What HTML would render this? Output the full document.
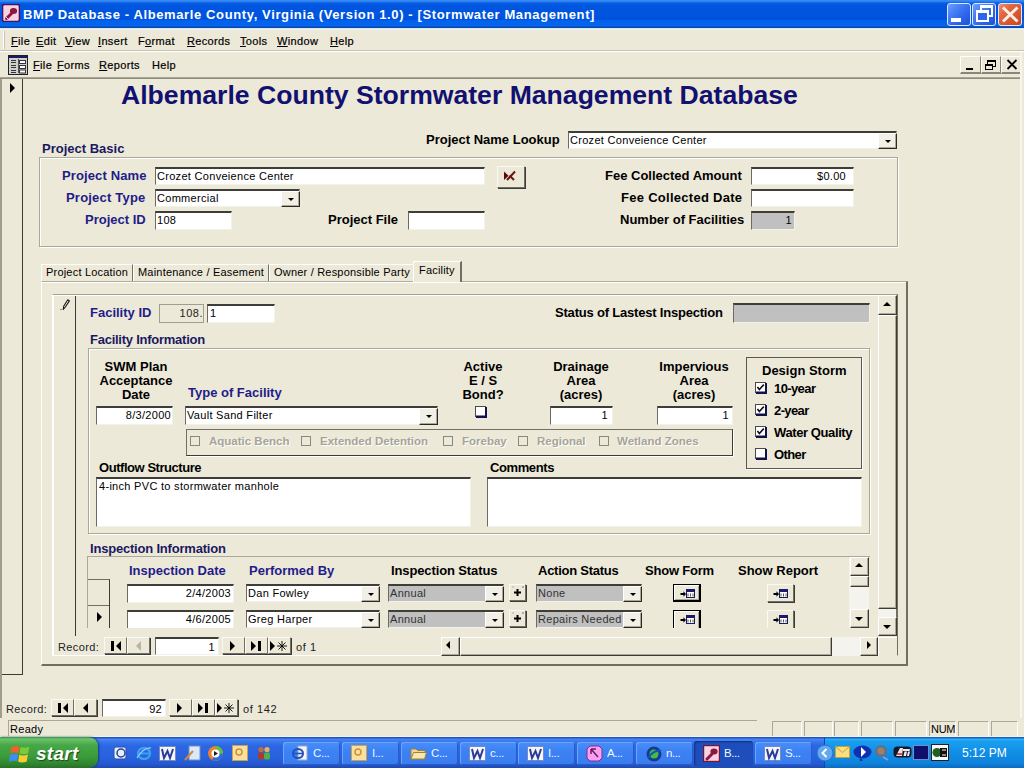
<!DOCTYPE html>
<html><head><meta charset="utf-8"><title>BMP Database</title>
<style>
*{margin:0;padding:0;box-sizing:border-box}
html,body{width:1024px;height:768px;overflow:hidden;background:#ECE9D8;font-family:"Liberation Sans",sans-serif;position:relative}
.a{position:absolute}
.t{position:absolute;white-space:nowrap;line-height:1}
.m{position:absolute;white-space:nowrap;line-height:1;font-size:11px;color:#000;letter-spacing:0.35px;-webkit-text-stroke:0.2px #000}
.n{position:absolute;white-space:nowrap;line-height:1;font-size:11px;color:#222;letter-spacing:0.35px}
.u{text-decoration:underline;text-underline-offset:1px}
.lb{position:absolute;white-space:nowrap;line-height:1;font-size:13px;font-weight:bold;color:#000}
.bl{color:#221C88}
.nv{color:#1A1862}
.tb{position:absolute;background:#fff;border-top:2px solid #3f3d38;border-left:1px solid #6b6a64;border-right:1px solid #F4F2E8;border-bottom:1px solid #F4F2E8}
.tx{position:absolute;font-size:11px;color:#000;white-space:nowrap;line-height:1;letter-spacing:0.3px}
.btn{position:absolute;background:#ECE9D8;border-top:1px solid #FAF9F4;border-left:1px solid #FAF9F4;border-right:1px solid #716F64;border-bottom:1px solid #716F64;box-shadow:1px 1px 0 #3c3b36}
.dd{position:absolute;top:0;right:-1px;bottom:-1px;width:19px;background:#F2F0E6;border-left:1px solid #fff;border-top:1px solid #fff;border-right:1px solid #2a2924;border-bottom:1px solid #2a2924;box-shadow:inset -1px -1px 0 #ACA899}
.dd:after{content:"";position:absolute;left:6px;top:6px;border-left:3px solid transparent;border-right:3px solid transparent;border-top:3px solid #000}
.grp{position:absolute;border:1px solid #ACA899;box-shadow:1px 1px 0 #fff, inset 1px 1px 0 #fff}
.sbb{position:absolute;background:#ECE9D8;border-top:1px solid #fff;border-left:1px solid #fff;border-right:1px solid #3c3b36;border-bottom:1px solid #3c3b36;box-shadow:inset -1px -1px 0 #ACA899}
</style></head><body>
<div class="a" style="left:0px;top:0px;width:1024px;height:28px;background:linear-gradient(#3A90F8 0px,#2A80F0 1.5px,#0A5EE2 3px,#0056E0 5px,#0054DE 16px,#0050D6 19px,#0060F2 20.5px,#0566EA 25.5px,#0A4AB4 27px,#0A48B0 28px)"></div>
<svg class="a" style="left:2px;top:4px;" width="18" height="18" viewBox="0 0 18 18"><rect x="0.5" y="0.5" width="17" height="17" rx="2" fill="#F6D2E2" stroke="#4A1258" stroke-width="1.6"/><path d="M4.5 14.5 L9.5 9.5" stroke="#8A1840" stroke-width="3" stroke-linecap="round"/><ellipse cx="11.5" cy="7" rx="3.6" ry="3" fill="#8A1840"/><path d="M4 13 L6 15" stroke="#F6D2E2" stroke-width="1"/></svg>
<div class="t" style="left:23px;top:8px;font-size:13px;font-weight:bold;color:#fff;letter-spacing:0.62px">BMP Database - Albemarle County, Virginia (Version 1.0) - [Stormwater Management]</div>
<div class="a" style="left:947px;top:3px;width:24px;height:23px;border:1px solid #DDE8FF;border-radius:3px;background:linear-gradient(135deg,#6EA0FF 0%,#4A80F6 30%,#2D64EA 65%,#1F52D8 100%)"></div>
<div class="a" style="left:972px;top:3px;width:24px;height:23px;border:1px solid #DDE8FF;border-radius:3px;background:linear-gradient(135deg,#6EA0FF 0%,#4A80F6 30%,#2D64EA 65%,#1F52D8 100%)"></div>
<div class="a" style="left:998px;top:3px;width:24px;height:23px;border:1px solid #DDE8FF;border-radius:3px;background:linear-gradient(135deg,#F09070 0%,#E26842 30%,#D9552E 65%,#C8441E 100%)"></div>
<div class="a" style="left:951px;top:18px;width:10px;height:4px;background:#fff"></div>
<div class="a" style="left:980px;top:5px;width:13px;height:12px;border:2px solid #fff;border-top-width:3px"></div>
<div class="a" style="left:976px;top:10px;width:13px;height:12px;border:2px solid #fff;border-top-width:3px;background:#2E66EA"></div>
<svg class="a" style="left:998px;top:3px;" width="24" height="23" viewBox="0 0 24 23"><path d="M5 4.5 L19.5 18.5 M19.5 4.5 L5 18.5" stroke="#FBF0E8" stroke-width="3"/></svg>
<div class="a" style="left:0px;top:28px;width:1024px;height:1px;background:#D6E8F8"></div>
<div class="a" style="left:0px;top:29px;width:1024px;height:1px;background:#EEF0EA"></div>
<div class="a" style="left:3px;top:31px;width:2px;height:18px;border-left:1px solid #fff;border-right:1px solid #C8C5B4"></div>
<div class="m" style="left:11px;top:36px;"><span class="u">F</span>ile</div>
<div class="m" style="left:36px;top:36px;"><span class="u">E</span>dit</div>
<div class="m" style="left:65px;top:36px;"><span class="u">V</span>iew</div>
<div class="m" style="left:98px;top:36px;"><span class="u">I</span>nsert</div>
<div class="m" style="left:138px;top:36px;">F<span class="u">o</span>rmat</div>
<div class="m" style="left:187px;top:36px;"><span class="u">R</span>ecords</div>
<div class="m" style="left:240px;top:36px;"><span class="u">T</span>ools</div>
<div class="m" style="left:277px;top:36px;"><span class="u">W</span>indow</div>
<div class="m" style="left:330px;top:36px;"><span class="u">H</span>elp</div>
<div class="a" style="left:0px;top:50px;width:1024px;height:1px;background:#C5C2B2"></div>
<div class="a" style="left:0px;top:51px;width:1024px;height:1px;background:#fff"></div>
<svg class="a" style="left:8px;top:55px;" width="20" height="20" viewBox="0 0 20 20"><rect x="0.5" y="0.5" width="19" height="19" fill="#CFCFCF" stroke="#202020"/><rect x="1" y="1" width="18" height="2" fill="#1A1A6A"/><path d="M3 5.5 H8 M3 7.5 H8 M3 10.5 H8 M3 12.5 H8 M3 15.5 H8 M3 17.5 H8" stroke="#333" stroke-width="1"/><path d="M10.5 4 V18" stroke="#555" stroke-width="1"/><rect x="11.5" y="5.5" width="6" height="3" fill="#fff" stroke="#333" stroke-width="1"/><rect x="11.5" y="10.5" width="6" height="3" fill="#fff" stroke="#333" stroke-width="1"/><rect x="11.5" y="15" width="6" height="3" fill="#fff" stroke="#333" stroke-width="1"/></svg>
<div class="m" style="left:33px;top:60px;"><span class="u">F</span>ile</div>
<div class="m" style="left:57px;top:60px;"><span class="u">F</span>orms</div>
<div class="m" style="left:99px;top:60px;"><span class="u">R</span>eports</div>
<div class="m" style="left:152px;top:60px;">Help</div>
<div class="a" style="left:960px;top:56px;width:21px;height:18px;background:#ECE9D8;border-top:1px solid #fff;border-left:1px solid #fff;border-right:1px solid #8a877a;border-bottom:2px solid #8a877a"></div>
<div class="a" style="left:981px;top:56px;width:20px;height:18px;background:#ECE9D8;border-top:1px solid #fff;border-left:1px solid #fff;border-right:1px solid #8a877a;border-bottom:2px solid #8a877a"></div>
<div class="a" style="left:1001px;top:56px;width:21px;height:18px;background:#ECE9D8;border-top:1px solid #fff;border-left:1px solid #fff;border-right:1px solid #8a877a;border-bottom:2px solid #8a877a"></div>
<div class="a" style="left:966px;top:68px;width:7px;height:2px;background:#000"></div>
<div class="a" style="left:987px;top:60px;width:9px;height:7px;border:1px solid #000;border-top-width:2px"></div>
<div class="a" style="left:985px;top:64px;width:8px;height:6px;border:1px solid #000;border-top-width:2px;background:#ECE9D8"></div>
<svg class="a" style="left:1004px;top:57px;" width="16" height="15" viewBox="0 0 16 15"><path d="M3.5 3 L12.5 12 M12.5 3 L3.5 12" stroke="#000" stroke-width="1.8"/></svg>
<div class="a" style="left:0px;top:77px;width:1022px;height:1px;background:#A9A697"></div>
<div class="a" style="left:0px;top:78px;width:1022px;height:1px;background:#8F8C7E"></div>
<div class="a" style="left:0px;top:79px;width:2px;height:639px;background:#A09D8F"></div>
<div class="a" style="left:2px;top:79px;width:21px;height:596px;border-right:1px solid #3c3b36;border-bottom:1px solid #3c3b36"></div>
<div class="a" style="left:10px;top:83px;border-top:5px solid transparent;border-bottom:5px solid transparent;border-left:5px solid #000"></div>
<div class="a" style="left:1020px;top:52px;width:2px;height:670px;background:#F6F4EC"></div>
<div class="t" style="left:121px;top:82px;font-size:26.6px;font-weight:bold;color:#121070">Albemarle County Stormwater Management Database</div>
<div class="lb nv" style="left:42px;top:142px;">Project Basic</div>
<div class="lb" style="left:426px;top:133px;">Project Name Lookup</div>
<div class="tb" style="left:568px;top:131px;width:329px;height:18px;background:#fff"><div class="dd"></div></div>
<div class="tx" style="left:570px;top:135px;">Crozet Conveience Center</div>
<div class="grp" style="left:39px;top:157px;width:859px;height:90px"></div>
<div class="lb bl" style="left:62px;top:169px;letter-spacing:0.12px">Project Name</div>
<div class="tb" style="left:155px;top:167px;width:330px;height:18px;background:#fff;"></div>
<div class="tx" style="left:157px;top:171px;">Crozet Conveience Center</div>
<div class="btn" style="left:497px;top:166px;width:28px;height:22px;"></div>
<svg class="a" style="left:497px;top:166px;" width="28" height="22" viewBox="0 0 28 22"><path d="M7 5.5 L11.5 9.8 L7 14 Z" fill="#5a0a0a"/><path d="M10 14 L18 5.5 M12.5 9.5 L17 14" stroke="#6a1414" stroke-width="2" fill="none"/></svg>
<div class="lb bl" style="left:66px;top:191px;letter-spacing:0.2px">Project Type</div>
<div class="tb" style="left:155px;top:189px;width:145px;height:18px;background:#fff"><div class="dd"></div></div>
<div class="tx" style="left:157px;top:193px;">Commercial</div>
<div class="lb bl" style="left:85px;top:213px;">Project ID</div>
<div class="tb" style="left:155px;top:211px;width:77px;height:19px;background:#fff;"></div>
<div class="tx" style="left:157px;top:215px;">108</div>
<div class="lb" style="left:328px;top:213px;">Project File</div>
<div class="tb" style="left:408px;top:211px;width:77px;height:19px;background:#fff;"></div>
<div class="lb" style="left:605px;top:169px;">Fee Collected Amount</div>
<div class="tb" style="left:751px;top:167px;width:103px;height:18px;background:#fff;"></div>
<div class="tx" style="left:751px;top:171px;width:95px;text-align:right">$0.00</div>
<div class="lb" style="left:621px;top:191px;letter-spacing:0.28px">Fee Collected Date</div>
<div class="tb" style="left:751px;top:189px;width:103px;height:18px;background:#fff;"></div>
<div class="lb" style="left:620px;top:213px;">Number of Facilities</div>
<div class="tb" style="left:751px;top:211px;width:44px;height:19px;background:#C0C0C0;"></div>
<div class="tx" style="left:751px;top:215px;width:41px;text-align:right">1</div>
<div class="a" style="left:41px;top:281px;width:867px;height:385px;border-top:1px solid #B0AD9E;box-shadow:inset 0 1px 0 #fff;border-left:1px solid #fff;border-right:2px solid #716F64;border-bottom:2px solid #716F64"></div>
<div class="a" style="left:41px;top:264px;width:92px;height:17px;border-top:1px solid #fff;border-left:1px solid #fff;border-right:1px solid #716F64"></div>
<div class="tx" style="left:46px;top:267px;letter-spacing:0.2px">Project Location</div>
<div class="a" style="left:133px;top:264px;width:136px;height:17px;border-top:1px solid #fff;border-left:1px solid #fff;border-right:1px solid #716F64"></div>
<div class="tx" style="left:138px;top:267px;letter-spacing:0.2px">Maintenance / Easement</div>
<div class="a" style="left:269px;top:264px;width:145px;height:17px;border-top:1px solid #fff;border-left:1px solid #fff;border-right:1px solid #716F64"></div>
<div class="tx" style="left:274px;top:267px;letter-spacing:0.2px">Owner / Responsible Party</div>
<div class="a" style="left:413px;top:261px;width:49px;height:21px;background:#ECE9D8;border-top:1px solid #fff;border-left:1px solid #fff;border-right:2px solid #716F64"></div>
<div class="tx" style="left:419px;top:265px;letter-spacing:0.2px">Facility</div>
<div class="a" style="left:52px;top:294px;width:846px;height:362px;border-top:1px solid #A5A293;border-left:1px solid #fff;border-right:1px solid #716F64;border-bottom:1px solid #fff;box-shadow:inset 1px 1px 0 #fff"></div>
<div class="a" style="left:75px;top:296px;width:1px;height:340px;background:#3c3b36"></div>
<svg class="a" style="left:58px;top:297px;" width="14" height="14" viewBox="0 0 14 14"><path d="M5.2 12.5 L5.8 9 L9.8 2.8 L11.4 3.9 L7.3 10 Z" fill="#fff" stroke="#111" stroke-width="1.1" stroke-linejoin="round"/><path d="M2 12.5 H4" stroke="#888" stroke-width="1"/></svg>
<div class="lb bl" style="left:90px;top:306px;">Facility ID</div>
<div class="a" style="left:159px;top:304px;width:45px;height:19px;border:1px solid #A09E90;background:#ECE9D8"></div>
<div class="tx" style="left:159px;top:308px;width:44px;text-align:right;color:#222;letter-spacing:0.5px">108.</div>
<div class="tb" style="left:207px;top:304px;width:68px;height:19px;background:#fff;"></div>
<div class="tx" style="left:210px;top:308px;">1</div>
<div class="lb" style="left:555px;top:306px;letter-spacing:-0.2px">Status of Lastest Inspection</div>
<div class="tb" style="left:733px;top:303px;width:137px;height:20px;background:#C0C0C0;"></div>
<div class="lb nv" style="left:90px;top:333px;letter-spacing:-0.25px">Facility Information</div>
<div class="grp" style="left:88px;top:348px;width:782px;height:186px"></div>
<div class="lb" style="left:96px;top:360px;width:80px;text-align:center;line-height:14px">SWM Plan<br>Acceptance<br>Date</div>
<div class="tb" style="left:96px;top:406px;width:77px;height:19px;background:#fff;"></div>
<div class="tx" style="left:96px;top:410px;width:75px;text-align:right">8/3/2000</div>
<div class="lb bl" style="left:188px;top:386px;">Type of Facility</div>
<div class="tb" style="left:185px;top:406px;width:253px;height:19px;background:#fff"><div class="dd"></div></div>
<div class="tx" style="left:187px;top:410px;">Vault Sand Filter</div>
<div class="lb" style="left:453px;top:360px;width:60px;text-align:center;line-height:14px">Active<br>E / S<br>Bond?</div>
<svg class="a" style="left:475px;top:406px;" width="12" height="12" viewBox="0 0 12 12"><rect x="0.5" y="0.5" width="10" height="10" fill="#fff" stroke="#4a4a4a" stroke-width="1"/><path d="M1 10.8 H11.2 V1" stroke="#12124a" stroke-width="2.4" fill="none"/></svg>
<div class="lb" style="left:541px;top:360px;width:80px;text-align:center;line-height:14px">Drainage<br>Area<br>(acres)</div>
<div class="tb" style="left:550px;top:406px;width:63px;height:19px;background:#fff;"></div>
<div class="tx" style="left:550px;top:410px;width:58px;text-align:right">1</div>
<div class="lb" style="left:654px;top:360px;width:80px;text-align:center;line-height:14px">Impervious<br>Area<br>(acres)</div>
<div class="tb" style="left:657px;top:406px;width:76px;height:19px;background:#fff;"></div>
<div class="tx" style="left:657px;top:410px;width:72px;text-align:right">1</div>
<div class="a" style="left:186px;top:429px;width:547px;height:27px;border:1px solid #3c3b36;border-top-color:#716F64;border-left-color:#716F64;box-shadow:1px 1px 0 #fff"></div>
<div class="a" style="left:190px;top:436px;width:10px;height:10px;border:1px solid #8a887c"></div>
<div class="t" style="left:209px;top:436px;font-size:11.5px;font-weight:bold;color:#A6A498;text-shadow:1px 1px 0 #fff">Aquatic Bench</div>
<div class="a" style="left:301px;top:436px;width:10px;height:10px;border:1px solid #8a887c"></div>
<div class="t" style="left:320px;top:436px;font-size:11.5px;font-weight:bold;color:#A6A498;text-shadow:1px 1px 0 #fff">Extended Detention</div>
<div class="a" style="left:443px;top:436px;width:10px;height:10px;border:1px solid #8a887c"></div>
<div class="t" style="left:462px;top:436px;font-size:11.5px;font-weight:bold;color:#A6A498;text-shadow:1px 1px 0 #fff">Forebay</div>
<div class="a" style="left:518px;top:436px;width:10px;height:10px;border:1px solid #8a887c"></div>
<div class="t" style="left:537px;top:436px;font-size:11.5px;font-weight:bold;color:#A6A498;text-shadow:1px 1px 0 #fff">Regional</div>
<div class="a" style="left:599px;top:436px;width:10px;height:10px;border:1px solid #8a887c"></div>
<div class="t" style="left:617px;top:436px;font-size:11.5px;font-weight:bold;color:#A6A498;text-shadow:1px 1px 0 #fff">Wetland Zones</div>
<div class="a" style="left:746px;top:357px;width:116px;height:112px;border:1px solid #5a5850;box-shadow:1px 1px 0 #fff"></div>
<div class="lb" style="left:762px;top:364px;">Design Storm</div>
<svg class="a" style="left:755px;top:382px;" width="12" height="12" viewBox="0 0 12 12"><rect x="0.5" y="0.5" width="10" height="10" fill="#fff" stroke="#4a4a4a" stroke-width="1"/><path d="M1 10.8 H11.2 V1" stroke="#12124a" stroke-width="2.4" fill="none"/><path d="M2.4 5 L4.4 7.6 L8.8 2.6" stroke="#111" stroke-width="1.6" fill="none"/></svg>
<div class="lb" style="left:774px;top:382px;letter-spacing:-0.6px">10-year</div>
<svg class="a" style="left:755px;top:404px;" width="12" height="12" viewBox="0 0 12 12"><rect x="0.5" y="0.5" width="10" height="10" fill="#fff" stroke="#4a4a4a" stroke-width="1"/><path d="M1 10.8 H11.2 V1" stroke="#12124a" stroke-width="2.4" fill="none"/><path d="M2.4 5 L4.4 7.6 L8.8 2.6" stroke="#111" stroke-width="1.6" fill="none"/></svg>
<div class="lb" style="left:774px;top:404px;letter-spacing:-0.6px">2-year</div>
<svg class="a" style="left:755px;top:426px;" width="12" height="12" viewBox="0 0 12 12"><rect x="0.5" y="0.5" width="10" height="10" fill="#fff" stroke="#4a4a4a" stroke-width="1"/><path d="M1 10.8 H11.2 V1" stroke="#12124a" stroke-width="2.4" fill="none"/><path d="M2.4 5 L4.4 7.6 L8.8 2.6" stroke="#111" stroke-width="1.6" fill="none"/></svg>
<div class="lb" style="left:774px;top:426px;letter-spacing:-0.4px">Water Quality</div>
<svg class="a" style="left:755px;top:448px;" width="12" height="12" viewBox="0 0 12 12"><rect x="0.5" y="0.5" width="10" height="10" fill="#fff" stroke="#4a4a4a" stroke-width="1"/><path d="M1 10.8 H11.2 V1" stroke="#12124a" stroke-width="2.4" fill="none"/></svg>
<div class="lb" style="left:774px;top:448px;letter-spacing:-0.6px">Other</div>
<div class="lb" style="left:99px;top:461px;letter-spacing:-0.45px">Outflow Structure</div>
<div class="tb" style="left:96px;top:477px;width:375px;height:50px;background:#fff;"></div>
<div class="tx" style="left:99px;top:481px;">4-inch PVC to stormwater manhole</div>
<div class="lb" style="left:490px;top:461px;letter-spacing:-0.4px">Comments</div>
<div class="tb" style="left:487px;top:477px;width:375px;height:50px;background:#fff;"></div>
<div class="a" style="left:878px;top:295px;width:19px;height:341px;background:#F4F3EE;border-right:1px solid #716F64"></div>
<div class="sbb" style="left:878px;top:295px;width:19px;height:20px"></div>
<div class="a" style="left:883px;top:302px;border-left:4px solid transparent;border-right:4px solid transparent;border-bottom:4px solid #000"></div>
<div class="sbb" style="left:878px;top:315px;width:19px;height:294px"></div>
<div class="sbb" style="left:878px;top:617px;width:19px;height:19px"></div>
<div class="a" style="left:883px;top:625px;border-left:4px solid transparent;border-right:4px solid transparent;border-top:4px solid #000"></div>
<div class="sbb" style="left:441px;top:637px;width:19px;height:19px"></div>
<div class="a" style="left:446px;top:641px;border-top:4px solid transparent;border-bottom:4px solid transparent;border-right:4px solid #000"></div>
<div class="sbb" style="left:460px;top:637px;width:372px;height:19px"></div>
<div class="a" style="left:832px;top:637px;width:29px;height:19px;background:#F4F3EE"></div>
<div class="sbb" style="left:860px;top:637px;width:18px;height:19px"></div>
<div class="a" style="left:867px;top:641px;border-top:4px solid transparent;border-bottom:4px solid transparent;border-left:4px solid #000"></div>
<div class="a" style="left:878px;top:637px;width:19px;height:19px;background:#ECE9D8;border-left:1px solid #fff;border-top:1px solid #fff"></div>
<div class="lb nv" style="left:90px;top:542px;letter-spacing:-0.2px">Inspection Information</div>
<div class="a" style="left:87px;top:556px;width:783px;height:72px;border-top:1px solid #ACA899;border-left:1px solid #ACA899"></div>
<div class="a" style="left:88px;top:579px;width:22px;height:49px;border-top:1px solid #716F64;border-right:1px solid #3c3b36"></div>
<div class="a" style="left:88px;top:605px;width:21px;height:1px;background:#716F64"></div>
<div class="a" style="left:97px;top:612px;border-top:5px solid transparent;border-bottom:5px solid transparent;border-left:5px solid #000"></div>
<div class="lb bl" style="left:129px;top:564px;">Inspection Date</div>
<div class="lb bl" style="left:249px;top:564px;">Performed By</div>
<div class="lb" style="left:391px;top:564px;letter-spacing:-0.12px">Inspection Status</div>
<div class="lb" style="left:538px;top:564px;letter-spacing:-0.25px">Action Status</div>
<div class="lb" style="left:645px;top:564px;letter-spacing:-0.2px">Show Form</div>
<div class="lb" style="left:738px;top:564px;">Show Report</div>
<div class="tb" style="left:127px;top:584px;width:107px;height:19px;background:#fff;"></div>
<div class="tx" style="left:127px;top:588px;width:104px;text-align:right">2/4/2003</div>
<div class="tb" style="left:246px;top:584px;width:134px;height:18px;background:#fff"><div class="dd"></div></div>
<div class="tx" style="left:248px;top:588px;">Dan Fowley</div>
<div class="tb" style="left:388px;top:584px;width:116px;height:18px;background:#C0C0C0"><div class="dd"></div></div>
<div class="tx" style="left:390px;top:588px;color:#333">Annual</div>
<div class="btn" style="left:509px;top:584px;width:17px;height:17px;"></div>
<svg class="a" style="left:509px;top:584px;" width="17" height="17" viewBox="0 0 17 17"><path d="M8.5 5 V12 M5 8.5 H12" stroke="#000" stroke-width="2"/><rect x="3.5" y="2.5" width="1" height="1" fill="#777"/><rect x="13" y="2.5" width="2" height="1" fill="#777"/></svg>
<div class="tb" style="left:536px;top:584px;width:106px;height:18px;background:#C0C0C0"><div class="dd"></div></div>
<div class="tx" style="left:538px;top:588px;color:#333">None</div>
<div class="a" style="left:673px;top:584px;width:28px;height:18px;background:#ECE9D8;border:1px solid #000;border-right-width:2px;border-bottom-width:2px;box-shadow:inset 1px 1px 0 #fff, inset -1px -1px 0 #ACA899"></div>
<svg class="a" style="left:680px;top:589px;" width="16" height="10" viewBox="0 0 16 10"><path d="M6 5 L3.5 2.2 L3.5 4 L0.5 4 L0.5 6 L3.5 6 L3.5 7.8 Z" fill="#000"/><rect x="6.5" y="0.5" width="8" height="8" fill="#fff" stroke="#1a1a60"/><rect x="6.5" y="0.5" width="8" height="2.5" fill="#1a1a70"/><path d="M8 4.5 V7.5 M10.5 4.5 V7.5 M13 4.5 V7.5" stroke="#555" stroke-width="1"/></svg>
<div class="btn" style="left:767px;top:584px;width:27px;height:18px;"></div>
<svg class="a" style="left:773px;top:589px;" width="16" height="10" viewBox="0 0 16 10"><path d="M6 5 L3.5 2.2 L3.5 4 L0.5 4 L0.5 6 L3.5 6 L3.5 7.8 Z" fill="#000"/><rect x="6.5" y="0.5" width="8" height="8" fill="#fff" stroke="#1a1a60"/><rect x="6.5" y="0.5" width="8" height="2.5" fill="#1a1a70"/><path d="M8 4.5 V7.5 M10.5 4.5 V7.5 M13 4.5 V7.5" stroke="#555" stroke-width="1"/></svg>
<div class="tb" style="left:127px;top:610px;width:107px;height:19px;background:#fff;"></div>
<div class="tx" style="left:127px;top:614px;width:104px;text-align:right">4/6/2005</div>
<div class="tb" style="left:246px;top:610px;width:134px;height:18px;background:#fff"><div class="dd"></div></div>
<div class="tx" style="left:248px;top:614px;">Greg Harper</div>
<div class="tb" style="left:388px;top:610px;width:116px;height:18px;background:#C0C0C0"><div class="dd"></div></div>
<div class="tx" style="left:390px;top:614px;color:#333">Annual</div>
<div class="btn" style="left:509px;top:610px;width:17px;height:17px;"></div>
<svg class="a" style="left:509px;top:610px;" width="17" height="17" viewBox="0 0 17 17"><path d="M8.5 5 V12 M5 8.5 H12" stroke="#000" stroke-width="2"/><rect x="3.5" y="2.5" width="1" height="1" fill="#777"/><rect x="13" y="2.5" width="2" height="1" fill="#777"/></svg>
<div class="tb" style="left:536px;top:610px;width:106px;height:18px;background:#C0C0C0"><div class="dd"></div></div>
<div class="tx" style="left:538px;top:614px;color:#333">Repairs Needed</div>
<div class="a" style="left:673px;top:610px;width:28px;height:22px;background:#ECE9D8;border:1px solid #000;border-right-width:2px;border-bottom-width:2px;box-shadow:inset 1px 1px 0 #fff, inset -1px -1px 0 #ACA899"></div>
<svg class="a" style="left:680px;top:615px;" width="16" height="10" viewBox="0 0 16 10"><path d="M6 5 L3.5 2.2 L3.5 4 L0.5 4 L0.5 6 L3.5 6 L3.5 7.8 Z" fill="#000"/><rect x="6.5" y="0.5" width="8" height="8" fill="#fff" stroke="#1a1a60"/><rect x="6.5" y="0.5" width="8" height="2.5" fill="#1a1a70"/><path d="M8 4.5 V7.5 M10.5 4.5 V7.5 M13 4.5 V7.5" stroke="#555" stroke-width="1"/></svg>
<div class="btn" style="left:767px;top:610px;width:27px;height:22px;"></div>
<svg class="a" style="left:773px;top:615px;" width="16" height="10" viewBox="0 0 16 10"><path d="M6 5 L3.5 2.2 L3.5 4 L0.5 4 L0.5 6 L3.5 6 L3.5 7.8 Z" fill="#000"/><rect x="6.5" y="0.5" width="8" height="8" fill="#fff" stroke="#1a1a60"/><rect x="6.5" y="0.5" width="8" height="2.5" fill="#1a1a70"/><path d="M8 4.5 V7.5 M10.5 4.5 V7.5 M13 4.5 V7.5" stroke="#555" stroke-width="1"/></svg>
<div class="a" style="left:88px;top:628px;width:761px;height:8px;background:#ECE9D8"></div>
<div class="a" style="left:849px;top:557px;width:20px;height:71px;background:#F4F3EE"></div>
<div class="sbb" style="left:850px;top:557px;width:19px;height:19px"></div>
<div class="a" style="left:855px;top:563px;border-left:4px solid transparent;border-right:4px solid transparent;border-bottom:4px solid #000"></div>
<div class="sbb" style="left:850px;top:576px;width:19px;height:11px"></div>
<div class="sbb" style="left:850px;top:609px;width:19px;height:19px"></div>
<div class="a" style="left:855px;top:617px;border-left:4px solid transparent;border-right:4px solid transparent;border-top:4px solid #000"></div>
<div class="n" style="left:58px;top:642px;letter-spacing:0.4px">Record:</div>
<div class="btn" style="left:104px;top:637px;width:23px;height:17px;"></div>
<div class="a" style="left:111px;top:641px;width:3px;height:10px;background:#000"></div>
<div class="a" style="left:116px;top:641px;border-top:5px solid transparent;border-bottom:5px solid transparent;border-right:5px solid #000"></div>
<div class="btn" style="left:127px;top:637px;width:23px;height:17px;"></div>
<div class="a" style="left:136px;top:641px;border-top:5px solid transparent;border-bottom:5px solid transparent;border-right:5px solid #B8B5A8"></div>
<div class="tb" style="left:155px;top:637px;width:64px;height:18px;background:#fff;"></div>
<div class="tx" style="left:155px;top:642px;width:60px;text-align:right">1</div>
<div class="btn" style="left:222px;top:637px;width:23px;height:17px;"></div>
<div class="a" style="left:230px;top:641px;border-top:5px solid transparent;border-bottom:5px solid transparent;border-left:5px solid #000"></div>
<div class="btn" style="left:245px;top:637px;width:23px;height:17px;"></div>
<div class="a" style="left:251px;top:641px;border-top:5px solid transparent;border-bottom:5px solid transparent;border-left:5px solid #000"></div>
<div class="a" style="left:258px;top:641px;width:3px;height:10px;background:#000"></div>
<div class="btn" style="left:268px;top:637px;width:23px;height:17px;"></div>
<div class="a" style="left:270px;top:641px;border-top:5px solid transparent;border-bottom:5px solid transparent;border-left:5px solid #000"></div>
<svg class="a" style="left:276px;top:640px;" width="12" height="12" viewBox="0 0 12 12"><path d="M6 1 V11 M1 6 H11 M2.5 2.5 L9.5 9.5 M9.5 2.5 L2.5 9.5" stroke="#000" stroke-width="0.9"/></svg>
<div class="n" style="left:296px;top:642px;letter-spacing:0.6px">of 1</div>
<div class="n" style="left:6px;top:704px;letter-spacing:0.4px">Record:</div>
<div class="btn" style="left:51px;top:699px;width:23px;height:17px;"></div>
<div class="a" style="left:58px;top:703px;width:3px;height:10px;background:#000"></div>
<div class="a" style="left:63px;top:703px;border-top:5px solid transparent;border-bottom:5px solid transparent;border-right:5px solid #000"></div>
<div class="btn" style="left:74px;top:699px;width:23px;height:17px;"></div>
<div class="a" style="left:83px;top:703px;border-top:5px solid transparent;border-bottom:5px solid transparent;border-right:5px solid #000"></div>
<div class="tb" style="left:102px;top:699px;width:64px;height:18px;background:#fff;"></div>
<div class="tx" style="left:102px;top:704px;width:60px;text-align:right">92</div>
<div class="btn" style="left:169px;top:699px;width:23px;height:17px;"></div>
<div class="a" style="left:177px;top:703px;border-top:5px solid transparent;border-bottom:5px solid transparent;border-left:5px solid #000"></div>
<div class="btn" style="left:192px;top:699px;width:23px;height:17px;"></div>
<div class="a" style="left:198px;top:703px;border-top:5px solid transparent;border-bottom:5px solid transparent;border-left:5px solid #000"></div>
<div class="a" style="left:205px;top:703px;width:3px;height:10px;background:#000"></div>
<div class="btn" style="left:215px;top:699px;width:23px;height:17px;"></div>
<div class="a" style="left:217px;top:703px;border-top:5px solid transparent;border-bottom:5px solid transparent;border-left:5px solid #000"></div>
<svg class="a" style="left:223px;top:702px;" width="12" height="12" viewBox="0 0 12 12"><path d="M6 1 V11 M1 6 H11 M2.5 2.5 L9.5 9.5 M9.5 2.5 L2.5 9.5" stroke="#000" stroke-width="0.9"/></svg>
<div class="n" style="left:243px;top:704px;letter-spacing:0.6px">of 142</div>
<div class="a" style="left:0px;top:718px;width:1024px;height:19px;background:#ECE9D8"></div>
<div class="a" style="left:8px;top:720px;width:749px;height:17px;border-top:1px solid #ACA899;border-left:1px solid #ACA899"></div>
<div class="tx" style="left:10px;top:724px;">Ready</div>
<div class="a" style="left:772px;top:721px;width:30px;height:16px;border-top:1px solid #ACA899;border-left:1px solid #ACA899;border-right:1px solid #fff"></div>
<div class="a" style="left:804px;top:721px;width:29px;height:16px;border-top:1px solid #ACA899;border-left:1px solid #ACA899;border-right:1px solid #fff"></div>
<div class="a" style="left:834px;top:721px;width:25px;height:16px;border-top:1px solid #ACA899;border-left:1px solid #ACA899;border-right:1px solid #fff"></div>
<div class="a" style="left:861px;top:721px;width:32px;height:16px;border-top:1px solid #ACA899;border-left:1px solid #ACA899;border-right:1px solid #fff"></div>
<div class="a" style="left:895px;top:721px;width:32px;height:16px;border-top:1px solid #ACA899;border-left:1px solid #ACA899;border-right:1px solid #fff"></div>
<div class="a" style="left:929px;top:721px;width:27px;height:16px;border-top:1px solid #ACA899;border-left:1px solid #ACA899;border-right:1px solid #fff"></div>
<div class="a" style="left:958px;top:721px;width:31px;height:16px;border-top:1px solid #ACA899;border-left:1px solid #ACA899;border-right:1px solid #fff"></div>
<div class="a" style="left:991px;top:721px;width:27px;height:16px;border-top:1px solid #ACA899;border-left:1px solid #ACA899;border-right:1px solid #fff"></div>
<div class="tx" style="left:931px;top:724px;letter-spacing:-0.3px">NUM</div>
<div class="a" style="left:0px;top:736px;width:1024px;height:1px;background:#F2F4EE"></div>
<div class="a" style="left:0px;top:737px;width:1024px;height:31px;background:linear-gradient(#2452C0 0,#2452C0 1px,#4A88F2 2px,#3A7AEE 4px,#2C66E2 9px,#2862DE 20px,#2459D2 27px,#1F48B0 31px)"></div>
<div class="a" style="left:0px;top:737px;width:98px;height:31px;background:linear-gradient(#3C8F3C 0,#6CC46C 2px,#47A847 8px,#3A9A3A 20px,#2F852F 27px,#286F28 31px);border-radius:0 9px 9px 0;box-shadow:1px 0 2px #1a3a80"></div>
<svg class="a" style="left:7px;top:742px;" width="24" height="22" viewBox="0 0 24 22"><g transform="translate(1,1) scale(1.15)"><path d="M3 3.5 Q6.5 1.8 10 3.2 L9 9 Q5.5 7.6 2 9.2 Z" fill="#F0602A"/><path d="M11 3.4 Q14.5 4.8 18.5 3.2 L17.5 9 Q14 10.5 10 9.2 Z" fill="#7ACB3C"/><path d="M1.8 10.2 Q5.4 8.6 8.8 10 L7.8 16 Q4.4 14.6 0.8 16.2 Z" fill="#3A90EC"/><path d="M9.8 10.2 Q13.5 11.6 17.3 10 L16.3 16 Q12.6 17.6 8.8 16.2 Z" fill="#F8CC32"/></g></svg>
<div class="t" style="left:36px;top:744px;font-size:19px;font-weight:bold;font-style:italic;color:#fff;letter-spacing:0.3px;text-shadow:1px 1px 1px #1a4a1a">start</div>
<svg class="a" style="left:112px;top:745px;" width="16" height="16" viewBox="0 0 16 16"><rect x="2" y="2" width="12" height="12" rx="2" fill="#E8F0FF" stroke="#3050A0"/><circle cx="9" cy="8" r="4" fill="none" stroke="#2040A0" stroke-width="1.5"/></svg>
<svg class="a" style="left:136px;top:745px;" width="16" height="16" viewBox="0 0 16 16"><ellipse cx="8" cy="8.5" rx="6" ry="5.5" fill="none" stroke="#3AA0F0" stroke-width="2.4"/><path d="M2.5 8.5 H13" stroke="#3AA0F0" stroke-width="2"/><path d="M1 13 Q8 2 15 3" stroke="#8ED0FF" stroke-width="1.2" fill="none"/></svg>
<svg class="a" style="left:159px;top:745px;" width="17" height="16" viewBox="0 0 17 16"><rect x="0.5" y="1.5" width="16" height="14" fill="#F4F6FF" stroke="#7A8AC0"/><path d="M3 4 L5 13 L8.5 6 L11 13 L14 4" stroke="#2A3A9A" stroke-width="2" fill="none"/></svg>
<svg class="a" style="left:184px;top:745px;" width="17" height="16" viewBox="0 0 17 16"><rect x="5" y="1" width="11" height="14" fill="#DDE8F8" stroke="#7090C0"/><path d="M1 15 L9 6" stroke="#D08A40" stroke-width="2"/></svg>
<svg class="a" style="left:207px;top:745px;" width="17" height="17" viewBox="0 0 17 17"><circle cx="8.5" cy="8.5" r="7.5" fill="#F08030"/><path d="M8.5 1 A7.5 7.5 0 0 1 16 8.5 L8.5 8.5 Z" fill="#60C040"/><path d="M16 8.5 A7.5 7.5 0 0 1 5 15 L8.5 8.5 Z" fill="#2A70D8"/><circle cx="8.5" cy="8.5" r="4" fill="#fff"/><path d="M7 6 L11 8.5 L7 11 Z" fill="#222"/></svg>
<svg class="a" style="left:232px;top:745px;" width="16" height="16" viewBox="0 0 16 16"><rect x="0.5" y="0.5" width="15" height="15" fill="#F8E0A0" stroke="#C8A050"/><circle cx="7" cy="7" r="3" fill="none" stroke="#D09030" stroke-width="1.5"/></svg>
<svg class="a" style="left:256px;top:745px;" width="16" height="16" viewBox="0 0 16 16"><circle cx="5" cy="4.5" r="2.6" fill="#C86A3A"/><rect x="2" y="7.5" width="6" height="7" rx="2" fill="#B03A2A"/><circle cx="11" cy="4.5" r="2.6" fill="#E8B060"/><rect x="8" y="7.5" width="6" height="7" rx="2" fill="#50B040"/></svg>
<div class="a" style="left:283px;top:742px;width:57px;height:23px;background:linear-gradient(#4A8EF8,#3C82F4 40%,#3A7CEE);border-radius:3px;box-shadow:inset -1px -1px 0 #2A5CC8, inset 1px 1px 0 #6AA6FF"></div>
<svg class="a" style="left:292px;top:745px;" width="17" height="17" viewBox="0 0 17 17"><rect x="6" y="1" width="9" height="14" fill="#F4F4F0" stroke="#A0A8C0"/><ellipse cx="6" cy="8.5" rx="5" ry="4.5" fill="none" stroke="#2050C0" stroke-width="2"/><path d="M1.5 8.5 H10" stroke="#2050C0" stroke-width="1.6"/></svg>
<div class="t" style="left:313px;top:748px;font-size:11.5px;color:#F4F8FF;letter-spacing:-0.4px">C...</div>
<div class="a" style="left:342px;top:742px;width:57px;height:23px;background:linear-gradient(#4A8EF8,#3C82F4 40%,#3A7CEE);border-radius:3px;box-shadow:inset -1px -1px 0 #2A5CC8, inset 1px 1px 0 #6AA6FF"></div>
<svg class="a" style="left:351px;top:745px;" width="16" height="16" viewBox="0 0 16 16"><rect x="0.5" y="0.5" width="15" height="15" fill="#F8E0A0" stroke="#C8A050"/><circle cx="7" cy="7" r="3" fill="none" stroke="#D09030" stroke-width="1.5"/></svg>
<div class="t" style="left:372px;top:748px;font-size:11.5px;color:#F4F8FF;letter-spacing:-0.4px">I...</div>
<div class="a" style="left:401px;top:742px;width:57px;height:23px;background:linear-gradient(#4A8EF8,#3C82F4 40%,#3A7CEE);border-radius:3px;box-shadow:inset -1px -1px 0 #2A5CC8, inset 1px 1px 0 #6AA6FF"></div>
<svg class="a" style="left:410px;top:745px;" width="17" height="16" viewBox="0 0 17 16"><path d="M1 4 H6 L7.5 5.5 H15 V14 H1 Z" fill="#F0D890" stroke="#A08040"/><path d="M1 14 L3.5 7.5 H16.5 L14.5 14 Z" fill="#F8E8B0" stroke="#A08040"/></svg>
<div class="t" style="left:431px;top:748px;font-size:11.5px;color:#F4F8FF;letter-spacing:-0.4px">C...</div>
<div class="a" style="left:460px;top:742px;width:57px;height:23px;background:linear-gradient(#4A8EF8,#3C82F4 40%,#3A7CEE);border-radius:3px;box-shadow:inset -1px -1px 0 #2A5CC8, inset 1px 1px 0 #6AA6FF"></div>
<svg class="a" style="left:469px;top:745px;" width="17" height="16" viewBox="0 0 17 16"><rect x="0.5" y="1.5" width="16" height="14" fill="#F4F6FF" stroke="#7A8AC0"/><path d="M3 4 L5 13 L8.5 6 L11 13 L14 4" stroke="#2A3A9A" stroke-width="2" fill="none"/></svg>
<div class="t" style="left:490px;top:748px;font-size:11.5px;color:#F4F8FF;letter-spacing:-0.4px">c...</div>
<div class="a" style="left:518px;top:742px;width:57px;height:23px;background:linear-gradient(#4A8EF8,#3C82F4 40%,#3A7CEE);border-radius:3px;box-shadow:inset -1px -1px 0 #2A5CC8, inset 1px 1px 0 #6AA6FF"></div>
<svg class="a" style="left:527px;top:745px;" width="17" height="16" viewBox="0 0 17 16"><rect x="0.5" y="1.5" width="16" height="14" fill="#F4F6FF" stroke="#7A8AC0"/><path d="M3 4 L5 13 L8.5 6 L11 13 L14 4" stroke="#2A3A9A" stroke-width="2" fill="none"/></svg>
<div class="t" style="left:548px;top:748px;font-size:11.5px;color:#F4F8FF;letter-spacing:-0.4px">I...</div>
<div class="a" style="left:577px;top:742px;width:57px;height:23px;background:linear-gradient(#4A8EF8,#3C82F4 40%,#3A7CEE);border-radius:3px;box-shadow:inset -1px -1px 0 #2A5CC8, inset 1px 1px 0 #6AA6FF"></div>
<svg class="a" style="left:586px;top:745px;" width="17" height="17" viewBox="0 0 17 17"><path d="M4 1 H13 L16 4 V13 L13 16 H4 L1 13 V4 Z" fill="#FAA0F0" stroke="#8A2A8A"/><path d="M5 4 L12 12 M5 4 L5 9 M5 4 L10 4" stroke="#6A1A6A" stroke-width="1.5"/></svg>
<div class="t" style="left:607px;top:748px;font-size:11.5px;color:#F4F8FF;letter-spacing:-0.4px">A...</div>
<div class="a" style="left:636px;top:742px;width:57px;height:23px;background:linear-gradient(#4A8EF8,#3C82F4 40%,#3A7CEE);border-radius:3px;box-shadow:inset -1px -1px 0 #2A5CC8, inset 1px 1px 0 #6AA6FF"></div>
<svg class="a" style="left:645px;top:745px;" width="18" height="18" viewBox="0 0 18 18"><circle cx="9" cy="9" r="7.5" fill="#1A3A90"/><circle cx="9" cy="9" r="4.5" fill="#40C040"/><path d="M3 13 Q9 4 16 6" stroke="#1050C0" stroke-width="2" fill="none"/></svg>
<div class="t" style="left:666px;top:748px;font-size:11.5px;color:#F4F8FF;letter-spacing:-0.4px">n...</div>
<div class="a" style="left:694px;top:741px;width:59px;height:25px;background:#1E4EBC;border-radius:3px;box-shadow:inset 1px 1px 2px #10307A"></div>
<svg class="a" style="left:703px;top:745px;" width="17" height="17" viewBox="0 0 17 17"><rect x="0.5" y="0.5" width="16" height="16" fill="#F6D2E2" stroke="#801030" stroke-width="1.4"/><path d="M4 14 L9 9" stroke="#8A1840" stroke-width="3" stroke-linecap="round"/><ellipse cx="11" cy="6.5" rx="3.6" ry="3" fill="#8A1840"/></svg>
<div class="t" style="left:724px;top:748px;font-size:11.5px;color:#F4F8FF;letter-spacing:-0.4px">B...</div>
<div class="a" style="left:755px;top:742px;width:57px;height:23px;background:linear-gradient(#4A8EF8,#3C82F4 40%,#3A7CEE);border-radius:3px;box-shadow:inset -1px -1px 0 #2A5CC8, inset 1px 1px 0 #6AA6FF"></div>
<svg class="a" style="left:764px;top:745px;" width="17" height="16" viewBox="0 0 17 16"><rect x="0.5" y="1.5" width="16" height="14" fill="#F4F6FF" stroke="#7A8AC0"/><path d="M3 4 L5 13 L8.5 6 L11 13 L14 4" stroke="#2A3A9A" stroke-width="2" fill="none"/></svg>
<div class="t" style="left:785px;top:748px;font-size:11.5px;color:#F4F8FF;letter-spacing:-0.4px">S...</div>
<div class="a" style="left:824px;top:737px;width:200px;height:31px;background:linear-gradient(#1462C8 0,#1462C8 1px,#36B0F8 2px,#1AA0F0 4px,#1190E6 14px,#0E82DC 26px,#0C6CC0 31px);border-left:1px solid #0A4AB0"></div>
<svg class="a" style="left:816px;top:744px;" width="18" height="18" viewBox="0 0 18 18"><circle cx="9" cy="9" r="8" fill="#60A8F0" stroke="#2A70C8"/><path d="M10.5 5 L6.5 9 L10.5 13" stroke="#fff" stroke-width="2" fill="none"/></svg>
<svg class="a" style="left:835px;top:746px;" width="15" height="12" viewBox="0 0 15 12"><rect x="0.5" y="0.5" width="14" height="11" fill="#F8E080" stroke="#C0A040"/><path d="M0.5 0.5 L7.5 6.5 L14.5 0.5" stroke="#C0A040" fill="none"/></svg>
<svg class="a" style="left:853px;top:744px;" width="19" height="17" viewBox="0 0 19 17"><ellipse cx="9.5" cy="8" rx="9" ry="6.5" fill="#1030B0"/><path d="M8 3 L13 8 L8 13 Z" fill="#fff"/><path d="M7 15 L9 17" stroke="#1030B0" stroke-width="2"/></svg>
<svg class="a" style="left:873px;top:743px;" width="17" height="18" viewBox="0 0 17 18"><circle cx="8" cy="8" r="6" fill="#607090"/><circle cx="8" cy="8" r="3.5" fill="#A08060"/><path d="M10 14 L15 17" stroke="#80A0D0" stroke-width="2"/></svg>
<svg class="a" style="left:893px;top:745px;" width="19" height="14" viewBox="0 0 19 14"><rect x="0.5" y="1.5" width="18" height="11" rx="4" fill="#101830"/><path d="M3 11 L7 3 H10 L9 11 Z" fill="#F0E0E0"/><path d="M10 4 H17 L16.5 6 H10 Z M11.5 6.5 H14 L13 11 H10.5 Z M15 6.5 H17 L16 11 H14 Z" fill="#F4E8E8"/><path d="M4 9 H9" stroke="#D02020" stroke-width="1.5"/></svg>
<div class="a" style="left:913px;top:745px;width:16px;height:15px;background:#10106A;border:1px solid #6A90D0"></div>
<svg class="a" style="left:931px;top:744px;" width="18" height="17" viewBox="0 0 18 17"><rect x="0.5" y="0.5" width="17" height="16" fill="#F8F8F8" stroke="#222"/><circle cx="6" cy="8.5" r="4.5" fill="#206020"/><rect x="9" y="4" width="7" height="9" fill="#111"/><path d="M11 6 H15 M11 11 H15" stroke="#fff"/></svg>
<div class="t" style="left:962px;top:747px;font-size:12px;color:#fff;letter-spacing:0px">5:12 PM</div>
</body></html>
